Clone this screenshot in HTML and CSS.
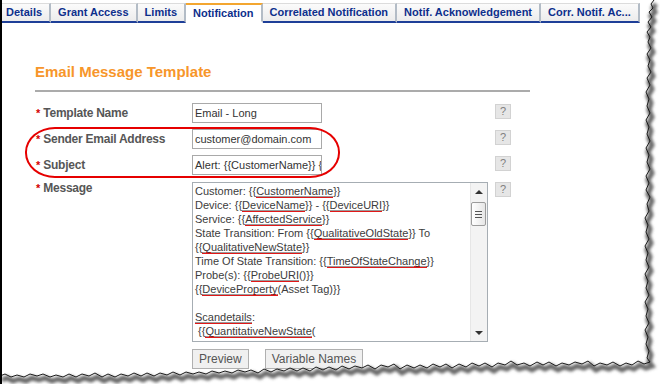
FILE: index.html
```html
<!DOCTYPE html>
<html>
<head>
<meta charset="utf-8">
<link rel="stylesheet" href="styles.css">
</head>
<body>
<div class="page">
  <div class="tabs">
    <div class="tab first">Details</div>
    <div class="tab">Grant Access</div>
    <div class="tab">Limits</div>
    <div class="tab active">Notification</div>
    <div class="tab">Correlated Notification</div>
    <div class="tab">Notif. Acknowledgement</div>
    <div class="tab">Corr. Notif. Ac...</div>
  </div>
  <div class="content">
    <h2 class="title">Email Message Template</h2>
    <div class="rule"></div>
    <div class="form">
      <div class="label"><span class="req">*</span>Template Name</div>
      <div class="field"><div class="input">Email - Long</div></div>
      <div class="help">?</div>

      <div class="label"><span class="req">*</span>Sender Email Address</div>
      <div class="field"><div class="input">customer@domain.com</div></div>
      <div class="help">?</div>

      <div class="label"><span class="req">*</span>Subject</div>
      <div class="field"><div class="input">Alert: {{CustomerName}} {{DeviceName}}</div></div>
      <div class="help">?</div>

      <div class="label top"><span class="req">*</span>Message</div>
      <div class="field">
        <div class="textarea">
          <div class="text">
            <div class="line">Customer: {{<span class="v">CustomerName</span>}}</div>
            <div class="line">Device: {{<span class="v">DeviceName</span>}} - {{<span class="v">DeviceURI</span>}}</div>
            <div class="line">Service: {{<span class="v">AffectedService</span>}}</div>
            <div class="line">State Transition: From {{<span class="v">QualitativeOldState</span>}} To</div>
            <div class="line">{{<span class="v">QualitativeNewState</span>}}</div>
            <div class="line">Time Of State Transition: {{<span class="v">TimeOfStateChange</span>}}</div>
            <div class="line">Probe(s): {{<span class="v">ProbeURI</span>()}}</div>
            <div class="line">{{<span class="v">DeviceProperty</span>(Asset Tag)}}</div>
            <div class="line"> </div>
            <div class="line"><span class="v">Scandetails</span>:</div>
            <div class="line"> {{<span class="v">QuantitativeNewState</span>(</div>
            <div class="line"> }}}</div>
          </div>
          <div class="scrollbar">
            <div class="sb-btn"><span class="arrow-up"></span></div>
            <div class="sb-track">
              <div class="thumb"><span class="grip"></span><span class="grip"></span><span class="grip"></span></div>
            </div>
            <div class="sb-btn"><span class="arrow-down"></span></div>
          </div>
        </div>
      </div>
      <div class="help">?</div>
    </div>
    <div class="buttons">
      <div class="btn">Preview</div>
      <div class="btn">Variable Names</div>
    </div>
  </div>
  <div class="highlight"></div>
  <svg class="torn" width="660" height="384" viewBox="0 0 660 384">
    <defs>
      <filter id="blur" x="-5%" y="-5%" width="110%" height="110%">
        <feGaussianBlur stdDeviation="1.6"/>
      </filter>
    </defs>
    <path fill="#ffffff" d="M654,0 L651,4 L653,8 L649,12 L652,17 L648,22 L651,27 L647,32 L650,37 L648,42 L651,48 L647,54 L650,60 L648,66 L651,72 L647,78 L650,85 L646,92 L649,99 L647,106 L650,113 L646,120 L649,127 L647,134 L650,141 L646,148 L649,155 L647,162 L650,169 L646,176 L649,183 L646,190 L650,197 L647,204 L649,211 L645,218 L648,225 L646,232 L649,239 L645,246 L648,253 L646,260 L649,267 L645,274 L648,281 L646,288 L649,295 L645,302 L648,309 L646,316 L649,323 L645,330 L648,337 L646,344 L649,351 L647,358 L650,362 L644,364 L638,361 L632,365 L626,363 L620,366 L613,362 L607,365 L600,363 L594,366 L588,361 L582,364 L575,362 L569,365 L562,363 L556,366 L549,362 L543,365 L537,362 L530,366 L524,363 L517,365 L511,361 L505,365 L498,363 L492,367 L485,363 L479,366 L472,363 L466,367 L459,364 L452,368 L446,364 L440,367 L433,364 L427,368 L420,365 L414,368 L407,365 L400,369 L394,364 L388,367 L381,365 L375,369 L368,365 L362,368 L355,366 L349,369 L342,366 L336,370 L329,367 L323,370 L316,367 L310,371 L303,368 L297,371 L290,368 L284,371 L277,369 L271,372 L264,369 L258,373 L251,370 L245,372 L238,370 L232,373 L225,371 L219,373 L212,371 L206,374 L199,372 L193,374 L186,372 L180,375 L173,372 L167,375 L160,373 L154,376 L147,373 L141,376 L134,373 L128,376 L121,374 L115,377 L108,374 L102,377 L95,373 L89,376 L82,374 L76,377 L69,374 L63,377 L56,375 L50,377 L43,374 L37,376 L30,374 L24,377 L17,375 L11,377 L5,374 L0,376 L0,384 L660,384 L660,0 Z"/>
    <polyline transform="translate(2,4)" filter="url(#blur)" fill="none" stroke="#6a6a6a" stroke-width="5" points="654,0 651,4 653,8 649,12 652,17 648,22 651,27 647,32 650,37 648,42 651,48 647,54 650,60 648,66 651,72 647,78 650,85 646,92 649,99 647,106 650,113 646,120 649,127 647,134 650,141 646,148 649,155 647,162 650,169 646,176 649,183 646,190 650,197 647,204 649,211 645,218 648,225 646,232 649,239 645,246 648,253 646,260 649,267 645,274 648,281 646,288 649,295 645,302 648,309 646,316 649,323 645,330 648,337 646,344 649,351 647,358 650,362 644,364 638,361 632,365 626,363 620,366 613,362 607,365 600,363 594,366 588,361 582,364 575,362 569,365 562,363 556,366 549,362 543,365 537,362 530,366 524,363 517,365 511,361 505,365 498,363 492,367 485,363 479,366 472,363 466,367 459,364 452,368 446,364 440,367 433,364 427,368 420,365 414,368 407,365 400,369 394,364 388,367 381,365 375,369 368,365 362,368 355,366 349,369 342,366 336,370 329,367 323,370 316,367 310,371 303,368 297,371 290,368 284,371 277,369 271,372 264,369 258,373 251,370 245,372 238,370 232,373 225,371 219,373 212,371 206,374 199,372 193,374 186,372 180,375 173,372 167,375 160,373 154,376 147,373 141,376 134,373 128,376 121,374 115,377 108,374 102,377 95,373 89,376 82,374 76,377 69,374 63,377 56,375 50,377 43,374 37,376 30,374 24,377 17,375 11,377 5,374 0,376"/>
    <polyline fill="none" stroke="#1a1a1a" stroke-width="1" points="654,0 651,4 653,8 649,12 652,17 648,22 651,27 647,32 650,37 648,42 651,48 647,54 650,60 648,66 651,72 647,78 650,85 646,92 649,99 647,106 650,113 646,120 649,127 647,134 650,141 646,148 649,155 647,162 650,169 646,176 649,183 646,190 650,197 647,204 649,211 645,218 648,225 646,232 649,239 645,246 648,253 646,260 649,267 645,274 648,281 646,288 649,295 645,302 648,309 646,316 649,323 645,330 648,337 646,344 649,351 647,358 650,362 644,364 638,361 632,365 626,363 620,366 613,362 607,365 600,363 594,366 588,361 582,364 575,362 569,365 562,363 556,366 549,362 543,365 537,362 530,366 524,363 517,365 511,361 505,365 498,363 492,367 485,363 479,366 472,363 466,367 459,364 452,368 446,364 440,367 433,364 427,368 420,365 414,368 407,365 400,369 394,364 388,367 381,365 375,369 368,365 362,368 355,366 349,369 342,366 336,370 329,367 323,370 316,367 310,371 303,368 297,371 290,368 284,371 277,369 271,372 264,369 258,373 251,370 245,372 238,370 232,373 225,371 219,373 212,371 206,374 199,372 193,374 186,372 180,375 173,372 167,375 160,373 154,376 147,373 141,376 134,373 128,376 121,374 115,377 108,374 102,377 95,373 89,376 82,374 76,377 69,374 63,377 56,375 50,377 43,374 37,376 30,374 24,377 17,375 11,377 5,374 0,376"/>
  </svg>
</div>
</body>
</html>
```
FILE: styles.css
```css
* { box-sizing: border-box; }
html, body { margin: 0; padding: 0; background: #fff; }
body { font-family: "Liberation Sans", Arial, sans-serif; }

.page {
  position: relative;
  width: 660px;
  height: 384px;
  overflow: hidden;
  border-left: 2px solid #000;
  background: #fff;
}

/* Tabs */
.tabs {
  display: flex;
  padding-top: 3px;
}
.tab {
  height: 20px;
  line-height: 17px;
  padding: 0 7px;
  font-size: 11px;
  font-weight: bold;
  color: #0d2f8c;
  white-space: nowrap;
  background: linear-gradient(#fbfbfb, #ececec);
  border-top: 1px solid #dcdcdc;
  border-right: 2px solid #b3bcc6;
  border-bottom: 2px solid #1e3f98;
}
.tab.first { padding-left: 4px; }
.tab.active {
  background: #fff;
  border-top: 2px solid #f3a630;
  border-bottom: 2px solid #fff;
  line-height: 16px;
}

/* Content */
.content { padding-left: 33px; }
.title {
  margin: 40px 0 0;
  font-size: 15px;
  line-height: 18px;
  font-weight: bold;
  color: #f7962a;
}
.rule {
  margin-top: 9px;
  width: 495px;
  height: 2px;
  background: #ababab;
}

.form {
  margin-top: 11px;
  display: grid;
  grid-template-columns: 157px 303px 16px;
  grid-template-rows: 20px 20px 20px 160px;
  row-gap: 6px;
}
.label {
  display: flex;
  align-items: center;
  font-size: 12px;
  font-weight: bold;
  color: #565656;
  letter-spacing: -0.25px;
  white-space: nowrap;
}
.label.top { align-items: flex-start; line-height: 13px; margin-top: 1px; }
.req {
  color: #d40000;
  font-size: 11px;
  margin-left: 1px;
  margin-right: 3px;
  letter-spacing: 0;
}
.field { display: flex; }
.input {
  width: 130px;
  height: 20px;
  border: 1px solid #a9a9a9;
  padding: 0 2px;
  font-size: 11px;
  line-height: 18px;
  color: #333;
  white-space: nowrap;
  overflow: hidden;
}
.help {
  width: 16px;
  height: 15px;
  margin-top: 1px;
  background: #e6e6e6;
  border: 1px solid #d2d2d2;
  color: #808080;
  font-size: 11px;
  line-height: 13px;
  text-align: center;
}
.label.top ~ .field,
.label.top ~ .help { margin-top: 1px; }

.textarea {
  width: 296px;
  height: 160px;
  border: 1px solid #a6adb3;
  display: flex;
  overflow: hidden;
}
.text {
  flex: 1;
  padding: 1px 2px 0;
  font-size: 11px;
  line-height: 14px;
  color: #3c3c3c;
  overflow: hidden;
}
.line { white-space: pre; height: 14px; }
.v {
  text-decoration: underline;
  text-decoration-color: #9a9a9a;
  text-underline-offset: 1px;
  background-image: radial-gradient(circle, #e01010 0.7px, transparent 0.9px);
  background-size: 2px 2px;
  background-repeat: repeat-x;
  background-position: 0 100%;
  padding-bottom: 1px;
}

.scrollbar {
  width: 17px;
  flex: none;
  display: flex;
  flex-direction: column;
  background: #f3f3f3;
  border-left: 1px solid #e6e6e6;
}
.sb-btn {
  height: 17px;
  display: flex;
  align-items: center;
  justify-content: center;
}
.arrow-up {
  width: 0; height: 0;
  border-left: 4px solid transparent;
  border-right: 4px solid transparent;
  border-bottom: 4px solid #333;
}
.arrow-down {
  width: 0; height: 0;
  border-left: 4px solid transparent;
  border-right: 4px solid transparent;
  border-top: 4px solid #333;
}
.sb-track { flex: 1; padding-top: 2px; }
.thumb {
  width: 15px;
  height: 24px;
  border: 1px solid #9c9c9c;
  border-radius: 2px;
  background: linear-gradient(90deg, #ffffff, #e6e6e6);
  display: flex;
  flex-direction: column;
  align-items: center;
  justify-content: center;
  gap: 2px;
}
.grip { width: 7px; height: 1px; background: #555; }

.buttons {
  display: flex;
  gap: 16px;
  margin-top: 8px;
  padding-left: 157px;
}
.btn {
  height: 20px;
  padding: 0 6px;
  border: 1px solid #b0b0b0;
  background: #f0f0f0;
  font-size: 12px;
  line-height: 18px;
  color: #555;
  white-space: nowrap;
}

/* Overlays */
.highlight {
  position: absolute;
  left: 23px;
  top: 127px;
  width: 315px;
  height: 51px;
  border: 2px solid #e60000;
  border-radius: 30px / 25px;
}
.torn {
  position: absolute;
  left: -2px;
  top: 0;
}
```
